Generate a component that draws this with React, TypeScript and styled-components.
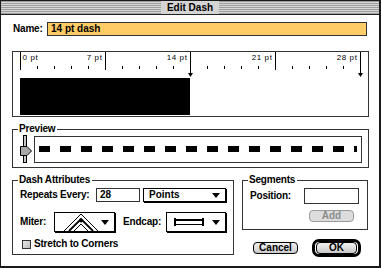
import React from "react";
import styled, { createGlobalStyle } from "styled-components";

const GlobalStyle = createGlobalStyle`
  html, body { margin: 0; padding: 0; background: #fff; }
  body { width: 381px; height: 268px; overflow: hidden; font-family: "Liberation Sans", Arial, sans-serif; color: #000; }
  * { box-sizing: border-box; }
`;

const Window = styled.div`
  width: 381px;
  height: 268px;
  border: 1px solid #1a1a1a;
  border-right-width: 2px;
  border-bottom-width: 2px;
  background: #fff;
  display: flex;
  flex-direction: column;
`;

const TitleBar = styled.div`
  height: 14px;
  border-bottom: 1px solid #222;
  background: repeating-linear-gradient(to bottom, #9c9c9c 0 1px, #d6d6d6 1px 2px);
  display: flex;
  justify-content: center;
  align-items: center;
`;

const TitleText = styled.span`
  background: #d4d4d4;
  padding: 0 6px;
  font-weight: bold;
  font-size: 10px;
  line-height: 13px;
`;

const Content = styled.div`
  padding: 7px 10px 0 11px;
  display: flex;
  flex-direction: column;
`;

const Label = styled.span<{ $w?: number }>`
  font-weight: bold;
  font-size: 10px;
  line-height: 12px;
  letter-spacing: -0.2px;
  white-space: nowrap;
  ${(p) => (p.$w ? `width: ${p.$w}px; flex: none;` : "")}
`;

const NameRow = styled.div`
  display: flex;
  align-items: center;
  height: 14px;
  padding-left: 1px;
`;

const NameInput = styled.div`
  width: 320px;
  height: 14px;
  border: 1px solid #333;
  background: #ffcc66;
  font-weight: bold;
  font-size: 10px;
  line-height: 12px;
  padding-left: 3px;
`;

const Ruler = styled.div`
  margin-top: 15px;
  width: 357px;
  height: 66px;
  border: 1px solid #333;
  display: flex;
  flex-direction: column;
`;

const RulerScale = styled.svg`
  display: block;
  flex: none;
`;

const DashBar = styled.div<{ $w: number }>`
  margin-left: 7px;
  width: ${(p) => p.$w}px;
  height: 37px;
  background: #000;
`;

const Group = styled.fieldset<{ $w: number; $h: number }>`
  margin: 0;
  padding: 0;
  min-width: 0;
  border: 1px solid #333;
  width: ${(p) => p.$w}px;
  height: ${(p) => p.$h}px;
`;

const Legend = styled.legend`
  font-weight: bold;
  font-size: 10px;
  line-height: 12px;
  letter-spacing: -0.2px;
  padding: 0 2px 0 1px;
  margin-left: 5px;
`;

const PreviewGroup = styled(Group)`
  margin-top: 6px;
`;

const PreviewBody = styled.div`
  display: flex;
  align-items: center;
  padding: 0 0 0 7px;
`;

const PreviewBox = styled.div`
  margin-left: 2px;
  width: 328px;
  height: 27px;
  border: 1px solid #333;
  display: flex;
  align-items: center;
  padding-left: 4px;
`;

const DashStrip = styled.div`
  width: 318px;
  overflow: hidden;
  display: flex;
  gap: 10px;
`;

const Dash = styled.div`
  flex: none;
  width: 11px;
  height: 6px;
  background: #000;
`;

const Bottom = styled.div`
  margin-top: 6px;
  display: flex;
  gap: 8px;
`;

const GroupBody = styled.div`
  padding: 2px 0 0 7px;
  display: flex;
  flex-direction: column;
`;

const Row = styled.div<{ $h: number; $mt?: number }>`
  display: flex;
  align-items: center;
  height: ${(p) => p.$h}px;
  margin-top: ${(p) => p.$mt ?? 0}px;
`;

const TextField = styled.div<{ $w: number; $h: number }>`
  width: ${(p) => p.$w}px;
  height: ${(p) => p.$h}px;
  border: 1px solid #333;
  font-weight: bold;
  font-size: 10px;
  line-height: 12px;
  padding-left: 3px;
  flex: none;
`;

const Popup = styled.div<{ $w: number; $h: number; $ml?: number }>`
  width: ${(p) => p.$w}px;
  height: ${(p) => p.$h}px;
  margin-left: ${(p) => p.$ml ?? 0}px;
  border: 1px solid #000;
  box-shadow: 1px 1px 0 #000;
  display: flex;
  align-items: center;
  padding: 0 5px 0 5px;
  flex: none;
`;

const PopupText = styled.span`
  flex: 1;
  font-weight: bold;
  font-size: 10px;
  line-height: 12px;
`;

const PopupIcon = styled.svg`
  display: block;
  flex: none;
`;

const Spacer = styled.span`
  flex: 1;
`;

const Arrow = styled.span`
  flex: none;
  width: 0;
  height: 0;
  border-left: 4.5px solid transparent;
  border-right: 4.5px solid transparent;
  border-top: 5px solid #000;
`;

const Check = styled.span`
  width: 9px;
  height: 9px;
  margin-left: 2px;
  margin-right: 3px;
  border: 1px solid #333;
  background: linear-gradient(135deg, #e6e6e6, #bdbdbd);
  flex: none;
`;

const RightCol = styled.div`
  display: flex;
  flex-direction: column;
`;

const Button = styled.div<{ $w: number; $disabled?: boolean; $ml?: number }>`
  width: ${(p) => p.$w}px;
  height: 12px;
  margin-left: ${(p) => p.$ml ?? 0}px;
  border: 1px solid ${(p) => (p.$disabled ? "#9a9a9a" : "#000")};
  border-radius: 4px;
  background: ${(p) => (p.$disabled ? "#dcdcdc" : "linear-gradient(#f2f2f2, #c8c8c8)")};
  color: ${(p) => (p.$disabled ? "#8c8c8c" : "#000")};
  font-weight: bold;
  font-size: 10px;
  line-height: 10px;
  text-align: center;
  flex: none;
`;

const ButtonRow = styled.div`
  margin-top: 9px;
  display: flex;
  align-items: center;
  padding-left: 11px;
`;

const DefaultRing = styled.div`
  margin-left: 14px;
  width: 49px;
  height: 18px;
  border: 3px solid #000;
  border-radius: 7px;
  display: flex;
  align-items: center;
  justify-content: center;
`;

const PT = 12.15;
const X0 = 7;
const majors = [0, 7, 14, 21, 28];
const markers = [14, 28];
const minors: number[] = [];
for (let i = 0; i < 4; i++) for (let k = 1; k <= 4; k++) minors.push(i * 7 + k * 1.4);

const px = (pt: number) => Math.round(X0 + pt * PT) + 0.5;

function RulerDrawing() {
  return (
    <RulerScale width={355} height={26} viewBox="0 0 355 26">
      {majors.map((m) => (
        <line key={"M" + m} x1={px(m)} x2={px(m)} y1={0} y2={markers.includes(m) ? 23 : 18} stroke="#000" strokeWidth={1} shapeRendering="crispEdges" />
      ))}
      {markers.map((m) => (
        <polygon key={"A" + m} points={`${px(m) - 2.5},21 ${px(m) + 2.5},21 ${px(m)},25`} fill="#000" />
      ))}
      {minors.map((m) => (
        <line key={"m" + m} x1={px(m)} x2={px(m)} y1={14} y2={17} stroke="#000" strokeWidth={1} shapeRendering="crispEdges" />
      ))}
      {majors.map((m) => (
        <text
          key={"t" + m}
          x={m === 0 ? px(m) + 2 : px(m) - 3}
          y={8}
          textAnchor={m === 0 ? "start" : "end"}
          fontFamily="'Liberation Sans', Arial, sans-serif"
          fontSize={8}
          letterSpacing={0.6}
        >
          {m} pt
        </text>
      ))}
    </RulerScale>
  );
}

function Slider() {
  return (
    <svg width={12} height={28} viewBox="0 0 12 28" style={{ display: "block", flex: "none" }}>
      <rect x={3.5} y={0.5} width={3} height={27} fill="#c8c8c8" stroke="#000" />
      <polygon points="0.5,11.5 7,11.5 11.5,16 7,20.5 0.5,20.5" fill="#a8a8a8" stroke="#000" />
    </svg>
  );
}

function MiterIcon() {
  return (
    <PopupIcon width={36} height={18} viewBox="0 0 36 18">
      <polyline points="1,18 18,1 35,18" fill="none" stroke="#000" strokeWidth={1} />
      <polyline points="6,18 18,6 30,18" fill="none" stroke="#000" strokeWidth={1.8} />
      <circle cx={18} cy={7.5} r={2} fill="#000" />
      <polyline points="11,18 18,11 25,18" fill="none" stroke="#000" strokeWidth={1} />
    </PopupIcon>
  );
}

function EndcapIcon() {
  return (
    <PopupIcon width={30} height={8} viewBox="0 0 30 8">
      <rect x={0} y={1} width={30} height={2} fill="#000" />
      <rect x={0} y={6} width={30} height={1} fill="#000" />
      <rect x={0} y={0} width={2} height={8} fill="#000" />
      <rect x={28} y={0} width={2} height={8} fill="#000" />
    </PopupIcon>
  );
}

export default function App() {
  const dashLen = 14;
  const dashes = Array.from({ length: 16 });
  return (
    <>
      <GlobalStyle />
      <Window>
        <TitleBar>
          <TitleText>Edit Dash</TitleText>
        </TitleBar>
        <Content>
          <NameRow>
            <Label $w={34}>Name:</Label>
            <NameInput>14 pt dash</NameInput>
          </NameRow>
          <Ruler>
            <RulerDrawing />
            <DashBar $w={Math.round(dashLen * PT)} />
          </Ruler>
          <PreviewGroup $w={357} $h={45}>
            <Legend>Preview</Legend>
            <PreviewBody>
              <Slider />
              <PreviewBox>
                <DashStrip>
                  {dashes.map((_, i) => (
                    <Dash key={i} />
                  ))}
                </DashStrip>
              </PreviewBox>
            </PreviewBody>
          </PreviewGroup>
          <Bottom>
            <Group $w={222} $h={81}>
              <Legend>Dash Attributes</Legend>
              <GroupBody>
                <Row $h={14}>
                  <Label $w={76}>Repeats Every:</Label>
                  <TextField $w={44} $h={14}>28</TextField>
                  <Popup $w={83} $h={14} $ml={3}>
                    <PopupText>Points</PopupText>
                    <Arrow />
                  </Popup>
                </Row>
                <Row $h={20} $mt={10}>
                  <Label $w={34}>Miter:</Label>
                  <Popup $w={61} $h={20}>
                    <span style={{ width: 3 }} />
                    <MiterIcon />
                    <Spacer />
                    <Arrow />
                  </Popup>
                  <Label $w={43} style={{ marginLeft: 8 }}>Endcap:</Label>
                  <Popup $w={60} $h={20}>
                    <span style={{ width: 2 }} />
                    <EndcapIcon />
                    <Spacer />
                    <Arrow />
                  </Popup>
                </Row>
                <Row $h={10} $mt={7}>
                  <Check />
                  <Label>Stretch to Corners</Label>
                </Row>
              </GroupBody>
            </Group>
            <RightCol>
              <Group $w={126} $h={56}>
                <Legend>Segments</Legend>
                <GroupBody>
                  <Row $h={16}>
                    <Label $w={54}>Position:</Label>
                    <TextField $w={55} $h={16} />
                  </Row>
                  <Row $h={12} $mt={6}>
                    <Button $w={45} $disabled $ml={59}>Add</Button>
                  </Row>
                </GroupBody>
              </Group>
              <ButtonRow>
                <Button $w={45}>Cancel</Button>
                <DefaultRing>
                  <Button $w={41}>OK</Button>
                </DefaultRing>
              </ButtonRow>
            </RightCol>
          </Bottom>
        </Content>
      </Window>
    </>
  );
}
